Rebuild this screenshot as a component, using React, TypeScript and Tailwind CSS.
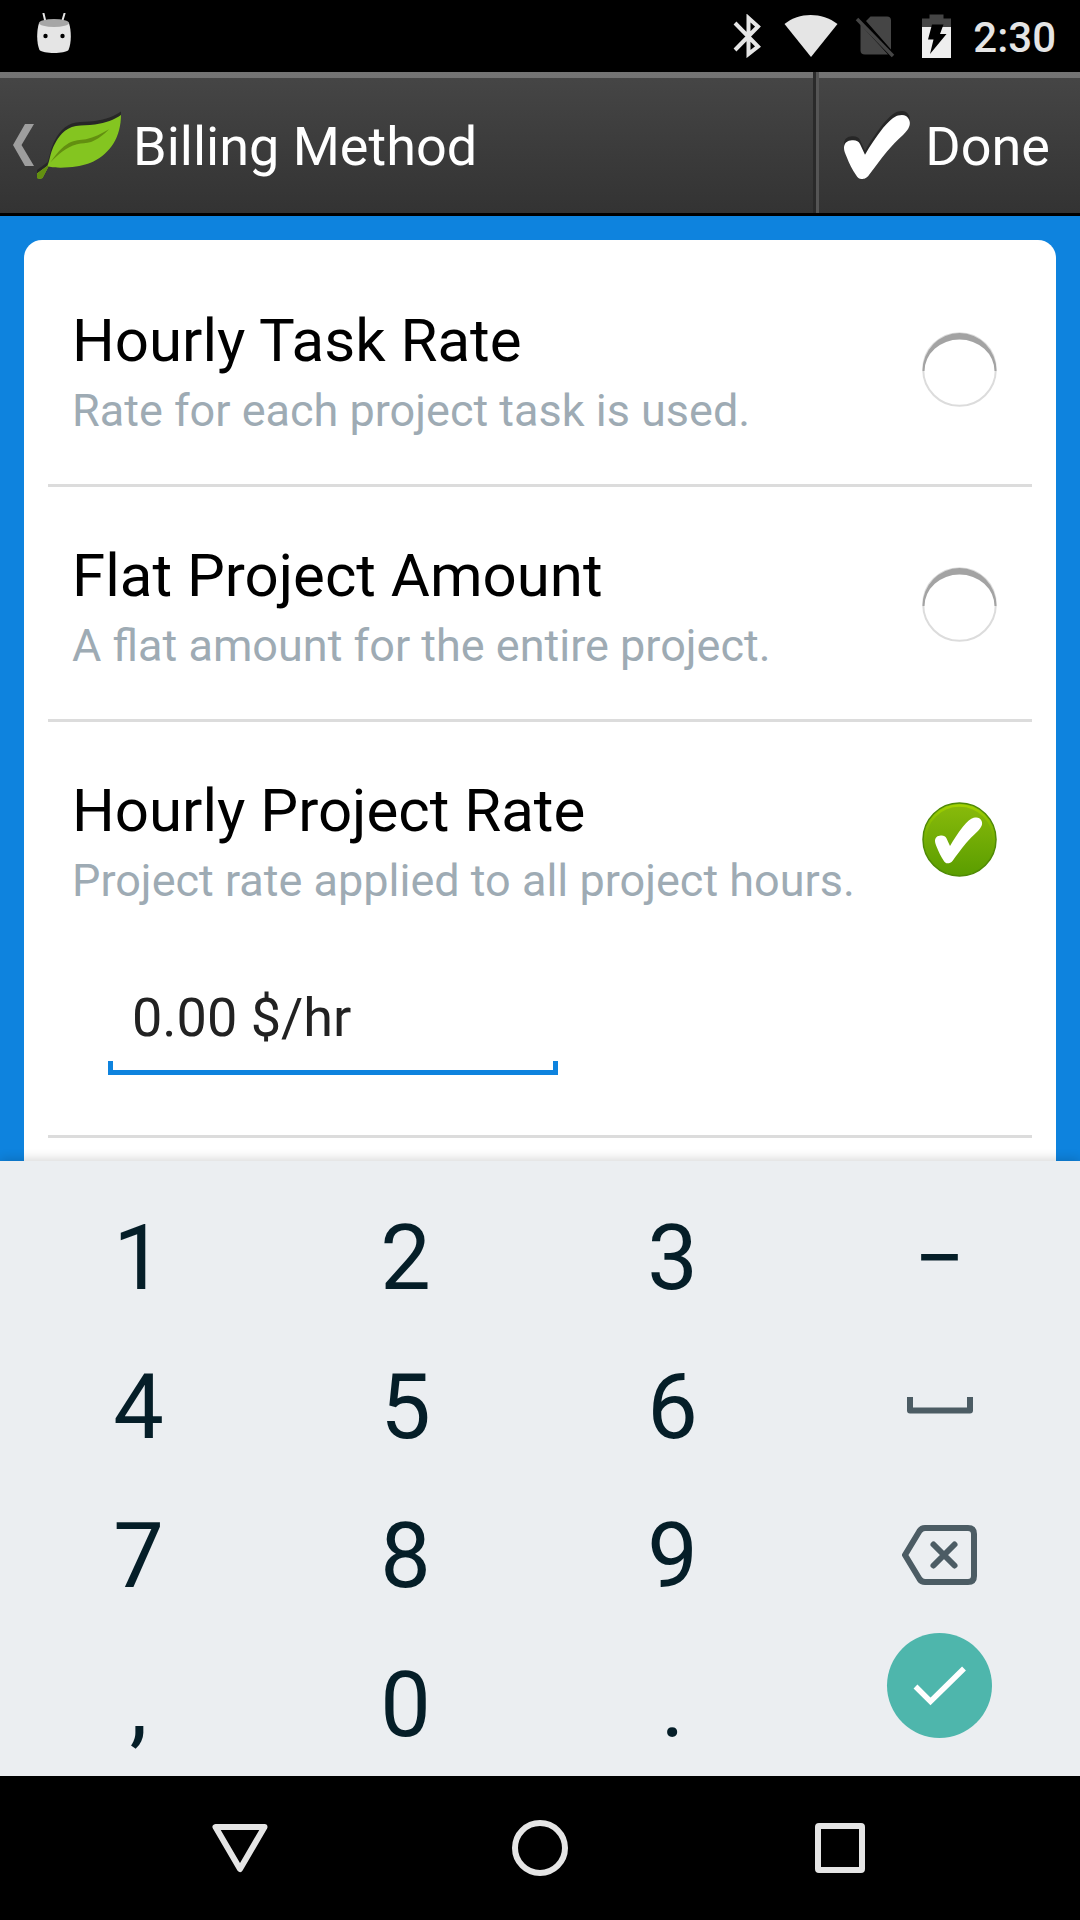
import { useState, type ReactNode } from "react";

const CHECK_PATH =
  "M0 33C0 28 3.500 25.500 8 25.300C12 25 14.500 26 16 29L21 39.700C26 31 32 22 39 13C45 6 50 1.500 54 .5C57 -.3 60 -.3 62 1C65.500 3.500 67 8 65 12C64 14.500 62 17 59 20C53 25.500 48 30.500 43 36.500C36 45 30 53.500 25 60C22.500 63.500 20 64 17.700 64C15 64 13.500 62.500 12 60C8.500 55 5 48 2.700 42C1 38 0 35.500 0 33Z";

const LEAF_PATH =
  "M84 3C77 8 69 10.800 58 12.500C51 13.500 45 13 39 14C33 15 29 17.500 25 21.500C19 28 15.500 36 13.800 42C12.500 46.500 12 50 10.500 53.700L0 61.500V66C1.500 67 4 67 5.500 66L11.500 54.500C17 55.800 24 56 31.900 55.300C42 54.300 49.500 52.500 56 49.700C64.500 45.500 71.500 39.500 76.600 31.300C81.500 23.500 84 13 84 3Z";

function StatusBar() {
  return (
    <div className="flex h-18 items-center bg-black pl-9 pr-6 text-[#e5e5e5]">
      <svg className="mb-1.5 h-10 w-9" viewBox="0 4 36 40" fill="none">
        <path d="M7.500 4.500L9.500 13M28.500 4.500L26 13" stroke="#e5e5e5" strokeWidth="2" strokeLinecap="round" />
        <path d="M3 14C10 10 26 10 33 14C35.500 22 35.500 34 32.500 41C29 45 7 45 3.500 41C.5 34 .5 22 3 14Z" fill="#e5e5e5" />
        <ellipse cx="18" cy="14" rx="15" ry="4" fill="#a6a6a6" />
        <circle cx="9.500" cy="27" r="2.200" fill="#000" />
        <circle cx="26.500" cy="27" r="2.200" fill="#000" />
      </svg>
      <div className="ml-auto flex items-center">
        <svg className="h-11 w-7" viewBox="0 0 28 44" fill="none" stroke="#e5e5e5" strokeWidth="4">
          <path d="M2 9L25 32.500L15.500 40V4L25 12.500L2 36" strokeMiterlimit="3" />
        </svg>
        <svg className="ml-[22px] h-11 w-14" viewBox="0 0 56 44">
          <path d="M1.500 10C16 -2 39 -2 54.500 10L28 43Z" fill="#e5e5e5" />
        </svg>
        <svg className="ml-4 h-11 w-10" viewBox="0 0 40 44">
          <path d="M15.500 2.500H32Q36 2.500 36 6.500V35.500L11 7ZM5.500 10.500L33 40.500H10Q5.500 40.500 5.500 36.500Z" fill="#454545" />
          <path d="M2 5L38 42" stroke="#454545" strokeWidth="3.500" />
        </svg>
        <svg className="ml-[26px] h-11 w-8" viewBox="0 0 32 44">
          <path d="M1 14V4.500H8.500V.5H22.500V4.500H30V14Z" fill="#454545" />
          <path d="M1 13H30V44H1Z" fill="#eee" />
          <path d="M11 10.500H22.500L19 20H25.500L9 40L12.500 25.500H7Z" fill="#000" />
        </svg>
        <span className="ml-5 pt-[3px] text-[42px] leading-[50px] font-medium">2:30</span>
      </div>
    </div>
  );
}

function Header() {
  return (
    <header className="flex h-36 border-b-[3px] border-black bg-linear-to-b from-[#464646] to-[#333] text-[54px] leading-16 text-white">
      <a href="#back" className="flex flex-1 items-center border-t-[6px] border-white/25 pl-3">
        <svg className="h-11 w-6 shrink-0" viewBox="0 1 24 44">
          <path d="M13 1H22L9.500 22L22 43H13L1 22Z" fill="#9e9e9e" />
        </svg>
        <svg className="h-[72px] w-[86px] shrink-0" viewBox="-1 -2 86 72">
          <path d={LEAF_PATH} fill="#272727" transform="translate(0 -3.500)" />
          <path d={LEAF_PATH} fill="#84c520" />
          <path
            d="M0 61.500V66C1.500 67 4 67 5.500 66L11.500 54.500L10.500 53.700ZM13.300 50.500C19 42 25 35 31.900 31C38 28 43 28.300 49 27.300C57 25.500 65 21.500 72 17.300C67 22.500 60 28 54 30C49 31.500 45 31 40 32.300C29 35.500 21 42.500 13.300 50.500Z"
            fill="#638f10"
          />
        </svg>
        <h1 className="ml-[11px] pt-0.5">Billing Method</h1>
      </a>
      <div className="w-[3px] bg-[#2a2a2a]" />
      <div className="w-[3px] bg-[#555]" />
      <button type="button" className="flex items-center gap-3.5 border-t-[6px] border-white/25 pl-6 pr-[30px]">
        <svg className="h-[72px] w-[68px]" viewBox="-1 -5 68 72">
          <path d={CHECK_PATH} fill="#272727" transform="translate(0 -4)" />
          <path d={CHECK_PATH} fill="#fff" />
        </svg>
        <span className="pt-0.5">Done</span>
      </button>
    </header>
  );
}

function RadioMark({ checked }: { checked: boolean }) {
  return (
    <svg className="pointer-events-none col-start-1 row-start-1 size-[75px]" viewBox="0 0 75 75">
      {checked ? (
        <>
          <defs>
            <linearGradient id="mark-fill" x1="0" y1="0" x2="0" y2="1">
              <stop offset="0" stopColor="#8abb0b" />
              <stop offset="1" stopColor="#5a9d00" />
            </linearGradient>
            <linearGradient id="mark-rim" x1="0" y1="0" x2="0" y2="1">
              <stop offset="0" stopColor="#a2d200" />
              <stop offset="0.7" stopColor="#6aaa00" stopOpacity="0" />
            </linearGradient>
          </defs>
          <circle cx="37.500" cy="37.500" r="36.500" fill="url(#mark-fill)" stroke="#4f8a05" strokeWidth="1.500" />
          <circle cx="37.500" cy="38" r="34.500" fill="none" stroke="url(#mark-rim)" strokeWidth="2.500" />
          <path d={CHECK_PATH} fill="#fff" transform="translate(13 15.500) scale(.715)" />
        </>
      ) : (
        <>
          <circle cx="37.500" cy="37.500" r="36.300" fill="#fff" stroke="#dcdcdc" strokeWidth="2" />
          <path d="M.5 39A37 38 0 0 1 74.500 39H72.500A35 31.500 0 0 0 2.500 39Z" fill="#a3a3a3" />
        </>
      )}
    </svg>
  );
}

const METHODS = [
  { id: "task", title: "Hourly Task Rate", note: "Rate for each project task is used." },
  { id: "flat", title: "Flat Project Amount", note: "A flat amount for the entire project." },
  { id: "project", title: "Hourly Project Rate", note: "Project rate applied to all project hours." },
];

function MethodList() {
  const [selected, setSelected] = useState("project");
  return (
    <main className="flex flex-1 flex-col bg-[#0e83de] px-6 pt-6">
      <div className="flex-1 rounded-t-[18px] bg-white px-6 pt-3">
        {METHODS.map((m) => (
          <div key={m.id} className="border-b-[3px] border-[#dcdcdc]">
            <label className="flex items-center justify-between pl-6 pr-[35px]">
              <span className="flex flex-col gap-2 pt-[54px] pb-[47px]">
                <span className="text-[60px] leading-[70px] text-black">{m.title}</span>
                <span className="text-[45px] leading-[53px] text-[#9eabb4]">{m.note}</span>
              </span>
              <span className="grid shrink-0 pt-0.5">
                <input
                  type="radio"
                  name="method"
                  className="col-start-1 row-start-1 size-[75px] appearance-none rounded-full"
                  checked={selected === m.id}
                  onChange={() => setSelected(m.id)}
                />
                <RadioMark checked={selected === m.id} />
              </span>
            </label>
            {m.id === "project" && (
              <div className="flex w-[510px] flex-col pt-8 pb-[60px] pl-[60px]">
                <input
                  type="text"
                  aria-label="Project hourly rate"
                  defaultValue="0.00 $/hr"
                  className="w-full px-6 pb-3 text-[54px] leading-[63px] text-[#222] outline-none"
                />
                <div className="h-[14px] border-x-[5px] border-b-[5px] border-[#0e83de]" />
              </div>
            )}
          </div>
        ))}
      </div>
    </main>
  );
}

function Key({ label }: { label: string }) {
  return (
    <button type="button" className="flex h-[149px] items-center justify-center pt-2">
      {label}
    </button>
  );
}

function IconKey({ label, children }: { label: string; children: ReactNode }) {
  return (
    <button type="button" aria-label={label} className="flex h-[149px] items-center justify-center pt-1">
      {children}
    </button>
  );
}

function Keypad() {
  return (
    <div className="relative grid grid-cols-4 bg-[#ebeef1] pt-[19px] pr-[7px] pl-[5px] text-[90px] leading-[106px] text-[#051e28] shadow-[0_-2px_10px_rgba(0,0,0,0.16)]">
      <Key label="1" />
      <Key label="2" />
      <Key label="3" />
      <Key label="−" />
      <Key label="4" />
      <Key label="5" />
      <Key label="6" />
      <IconKey label="Space">
        <svg className="h-5 w-17" viewBox="0 0 68 20" fill="none" stroke="#4c5c64" strokeWidth="6" strokeLinejoin="round">
          <path d="M4 1V14.500H64V1" />
        </svg>
      </IconKey>
      <Key label="7" />
      <Key label="8" />
      <Key label="9" />
      <IconKey label="Delete">
        <svg className="h-15 w-19" viewBox="1 0 76 60" fill="none" stroke="#4c5c64">
          <path d="M4 30L18.500 6Q20.500 3 24 3H67Q73 3 73 9V51Q73 57 67 57H24Q20.500 57 18.500 54Z" strokeWidth="6" />
          <path d="M32.500 19.500L53.500 40.500M53.500 19.500L32.500 40.500" strokeWidth="6" strokeLinecap="round" />
        </svg>
      </IconKey>
      <Key label="," />
      <Key label="0" />
      <Key label="." />
      <button type="button" aria-label="Enter" className="mt-1.5 flex size-[105px] items-center justify-center justify-self-center rounded-full bg-[#4eb6ac]">
        <svg className="h-10 w-14" viewBox="0 0 56 40" fill="none" stroke="#fff" strokeWidth="5.500">
          <path d="M3.500 20.500L18.500 35.500L52 2.500" />
        </svg>
      </button>
    </div>
  );
}

function NavBar() {
  return (
    <nav className="grid h-36 grid-cols-3 bg-black px-[90px]">
      <button type="button" aria-label="Back" className="flex items-center justify-center">
        <svg className="h-14 w-14" viewBox="0 0 56 56" fill="none" stroke="#e5e5e5" strokeWidth="6" strokeLinejoin="round">
          <path d="M3.500 7H52.500L28 49Z" />
        </svg>
      </button>
      <button type="button" aria-label="Home" className="flex items-center justify-center">
        <span className="size-14 rounded-full border-[6px] border-[#e5e5e5]" />
      </button>
      <button type="button" aria-label="Recent apps" className="flex items-center justify-center">
        <span className="size-[50px] rounded-[4px] border-[6px] border-[#e5e5e5]" />
      </button>
    </nav>
  );
}

export default function App() {
  return (
    <div className="flex min-h-screen flex-col bg-black font-[Roboto,sans-serif]">
      <StatusBar />
      <Header />
      <MethodList />
      <Keypad />
      <NavBar />
    </div>
  );
}
